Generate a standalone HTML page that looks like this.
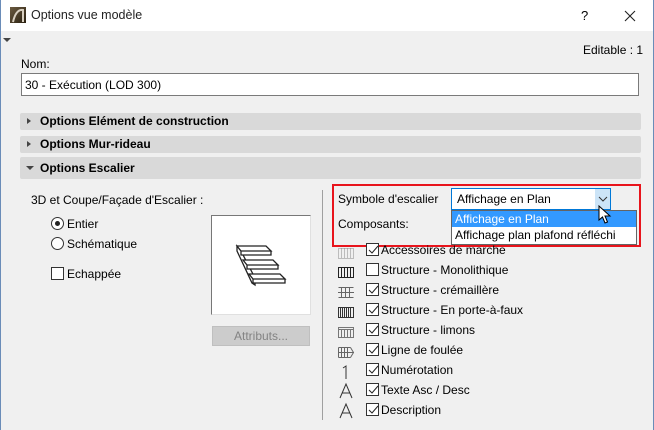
<!DOCTYPE html>
<html><head><meta charset="utf-8"><style>
*{margin:0;padding:0;box-sizing:border-box}
body{width:654px;height:430px;overflow:hidden;background:#f0f0f0;font-family:"Liberation Sans",sans-serif;font-size:12px;color:#000;position:relative}
.a{position:absolute;white-space:nowrap}
.bar{position:absolute;left:20px;width:621px;background:#d9d9d9;font-weight:bold;font-size:12px;padding-left:20px;border-radius:2px}
.tri{position:absolute;left:7px;width:0;height:0}
.cb{position:absolute;width:13px;height:13px;border:1px solid #333;background:#fff}
.cb svg{position:absolute;left:1px;top:1px}
</style></head><body>
<div class="a" style="left:0;top:0;width:654px;height:31px;background:#fff"></div>
<div class="a" style="left:0;top:0;width:1px;height:430px;background:#6a8cb8"></div>
<div class="a" style="left:653px;top:0;width:1px;height:430px;background:#6a8cb8"></div>
<div class="a" style="left:10px;top:7px;width:16px;height:16px;background:linear-gradient(135deg,#6b5a40,#2a2010)"></div>
<svg class="a" style="left:10px;top:7px" width="16" height="16"><path d="M3 15 Q6 2 13 3 L13 15" stroke="#d8cfc0" stroke-width="2" fill="none"/></svg>
<div class="a" style="left:31px;top:8px;font-size:12.5px;color:#222">Options vue modèle</div>
<div class="a" style="left:581px;top:8px;font-size:13px">?</div>
<svg class="a" style="left:624px;top:10px" width="12" height="12"><path d="M1 1L11 11M11 1L1 11" stroke="#222" stroke-width="1.1"/></svg>
<div class="a" style="left:3px;top:38px;width:0;height:0;border-left:4px solid transparent;border-right:4px solid transparent;border-top:4px solid #444"></div>
<div class="a" style="left:583px;top:43px">Editable : 1</div>
<div class="a" style="left:21px;top:57px">Nom:</div>
<div class="a" style="left:21px;top:73px;width:618px;height:23px;background:#fff;border:1px solid #7a7a7a;padding:4px 0 0 3px">30 - Exécution (LOD 300)</div>
<div class="bar" style="top:113px;height:17px;line-height:17px"><div class="tri" style="top:5px;border-top:3px solid transparent;border-bottom:3px solid transparent;border-left:4px solid #444"></div>Options Elément de construction</div>
<div class="bar" style="top:136px;height:17px;line-height:17px"><div class="tri" style="top:5px;border-top:3px solid transparent;border-bottom:3px solid transparent;border-left:4px solid #444"></div>Options Mur-rideau</div>
<div class="bar" style="top:157px;height:22px;line-height:22px"><div class="tri" style="top:9px;border-left:4px solid transparent;border-right:4px solid transparent;border-top:4px solid #444;left:6px"></div>Options Escalier</div>
<div class="a" style="left:31px;top:193px">3D et Coupe/Façade d'Escalier :</div>
<div class="a" style="left:51px;top:217px;width:13px;height:13px;border:1px solid #333;border-radius:50%;background:#fff"><div class="a" style="left:3px;top:3px;width:5px;height:5px;border-radius:50%;background:#222"></div></div>
<div class="a" style="left:67px;top:217px">Entier</div>
<div class="a" style="left:51px;top:237px;width:13px;height:13px;border:1px solid #333;border-radius:50%;background:#fff"></div>
<div class="a" style="left:67px;top:237px">Schématique</div>
<div class="cb" style="left:51px;top:267px"></div>
<div class="a" style="left:67px;top:267px">Echappée</div>
<div class="a" style="left:211px;top:215px;width:100px;height:100px;background:#fff;border-top:1px solid #777;border-left:1px solid #777;border-right:1px solid #e0e0e0;border-bottom:1px solid #e0e0e0"></div>
<svg class="a" style="left:211px;top:215px" width="100" height="100" fill="#fff" stroke="#222" stroke-width="1.3">
<path d="M26 31L26 36L41 68L44 70L44 63L30 36Z"/>
<path d="M26 31L55 31L60 36L30 36Z M30 36L60 36L60 40L30 40Z"/>
<path d="M32 45L62 45L67 50L36 50Z M36 50L67 50L67 54L36 54Z"/>
<path d="M38 59L69 59L74 64L42 64Z M42 64L74 64L74 68L42 68Z"/>
</svg>
<div class="a" style="left:212px;top:326px;width:98px;height:20px;background:#cccccc;border:1px solid #bfbfbf;color:#838383;text-align:center;line-height:18px">Attributs...</div>
<div class="a" style="left:322px;top:190px;width:1px;height:230px;background:#a0a0a0"></div>
<div class="a" style="left:332px;top:184px;width:309px;height:63px;border:2px solid #e8141c"></div>
<div class="a" style="left:338px;top:192px">Symbole d'escalier</div>
<div class="a" style="left:338px;top:217px">Composants:</div>
<div class="a" style="left:451px;top:188px;width:160px;height:22px;background:#fff;border:1px solid #0078d7;padding:3px 0 0 5px">Affichage en Plan</div>
<div class="a" style="left:595px;top:189px;width:15px;height:20px;background:#cce4f7"></div>
<svg class="a" style="left:598px;top:196px" width="10" height="6"><path d="M1 1L5 5L9 1" stroke="#333" fill="none"/></svg>
<div class="a" style="left:451px;top:210px;width:186px;height:35px;background:#fff;border:1px solid #646464"></div>
<div class="a" style="left:452px;top:211px;width:184px;height:16px;background:#3399ff;color:#fff;padding:1px 0 0 3px">Affichage en Plan</div>
<div class="a" style="left:455px;top:228px">Affichage plan plafond réfléchi</div>
<svg class="a" style="left:598px;top:205px" width="14" height="20"><path d="M1 1L1 15L4.5 12L7 18L9.5 17L7 11L12 11Z" fill="#fff" stroke="#000"/></svg>
<svg class="a" style="left:336px;top:246px" width="20" height="176" stroke="#555" fill="none" stroke-width="1">
<path d="M2.5 2.5h15v10h-15z M5.5 2.5v10M8.5 2.5v10M11.5 2.5v10M14.5 2.5v10" stroke="#888" stroke-dasharray="1 1"/>
<path d="M2.5 21.5h15v10h-15z M5.5 21.5v10M8.5 21.5v10M11.5 21.5v10M14.5 21.5v10" stroke="#222"/>
<path d="M2.5 41.5h15M2.5 51.5h15M2 46.5h16M5.5 41.5v10M9.5 41.5v10M13.5 41.5v10" stroke="#666"/>
<path d="M2.5 61.5h15v10h-15z M4.5 61.5v10M6.5 61.5v10M8.5 61.5v10M10.5 61.5v10M12.5 61.5v10M14.5 61.5v10" stroke="#333"/>
<path d="M2.5 81.5h15v10h-15z M2.5 83.5h15 M5.5 83.5v8M8.5 83.5v8M11.5 83.5v8M14.5 83.5v8" stroke="#777"/>
<path d="M2.5 101.5h12M2.5 111.5h12M2 106.5h16M2.5 101.5v10M5.5 101.5v10M8.5 101.5v10M11.5 101.5v10M14.5 101.5l3 5-3 5" stroke="#666"/>
<path d="M7 122l3-2v13" stroke="#333"/>
<path d="M4 152l6-14 6 14M6 147h8" stroke="#333"/>
<path d="M4 172l6-14 6 14M6 167h8" stroke="#333"/>
</svg>
<div class="a" style="left:0;top:0">
<div class="cb" style="left:366px;top:243px"><svg width="11" height="11"><path d="M1 5L4 8L10 1" stroke="#222" fill="none"/></svg></div>
<div class="a" style="left:381px;top:243px">Accessoires de marche</div>
<div class="cb" style="left:366px;top:263px"></div>
<div class="a" style="left:381px;top:263px">Structure - Monolithique</div>
<div class="cb" style="left:366px;top:283px"><svg width="11" height="11"><path d="M1 5L4 8L10 1" stroke="#222" fill="none"/></svg></div>
<div class="a" style="left:381px;top:283px">Structure - crémaillère</div>
<div class="cb" style="left:366px;top:303px"><svg width="11" height="11"><path d="M1 5L4 8L10 1" stroke="#222" fill="none"/></svg></div>
<div class="a" style="left:381px;top:303px">Structure - En porte-à-faux</div>
<div class="cb" style="left:366px;top:323px"><svg width="11" height="11"><path d="M1 5L4 8L10 1" stroke="#222" fill="none"/></svg></div>
<div class="a" style="left:381px;top:323px">Structure - limons</div>
<div class="cb" style="left:366px;top:343px"><svg width="11" height="11"><path d="M1 5L4 8L10 1" stroke="#222" fill="none"/></svg></div>
<div class="a" style="left:381px;top:343px">Ligne de foulée</div>
<div class="cb" style="left:366px;top:363px"><svg width="11" height="11"><path d="M1 5L4 8L10 1" stroke="#222" fill="none"/></svg></div>
<div class="a" style="left:381px;top:363px">Numérotation</div>
<div class="cb" style="left:366px;top:383px"><svg width="11" height="11"><path d="M1 5L4 8L10 1" stroke="#222" fill="none"/></svg></div>
<div class="a" style="left:381px;top:383px">Texte Asc / Desc</div>
<div class="cb" style="left:366px;top:403px"><svg width="11" height="11"><path d="M1 5L4 8L10 1" stroke="#222" fill="none"/></svg></div>
<div class="a" style="left:381px;top:403px">Description</div>
</div>
</body></html>
